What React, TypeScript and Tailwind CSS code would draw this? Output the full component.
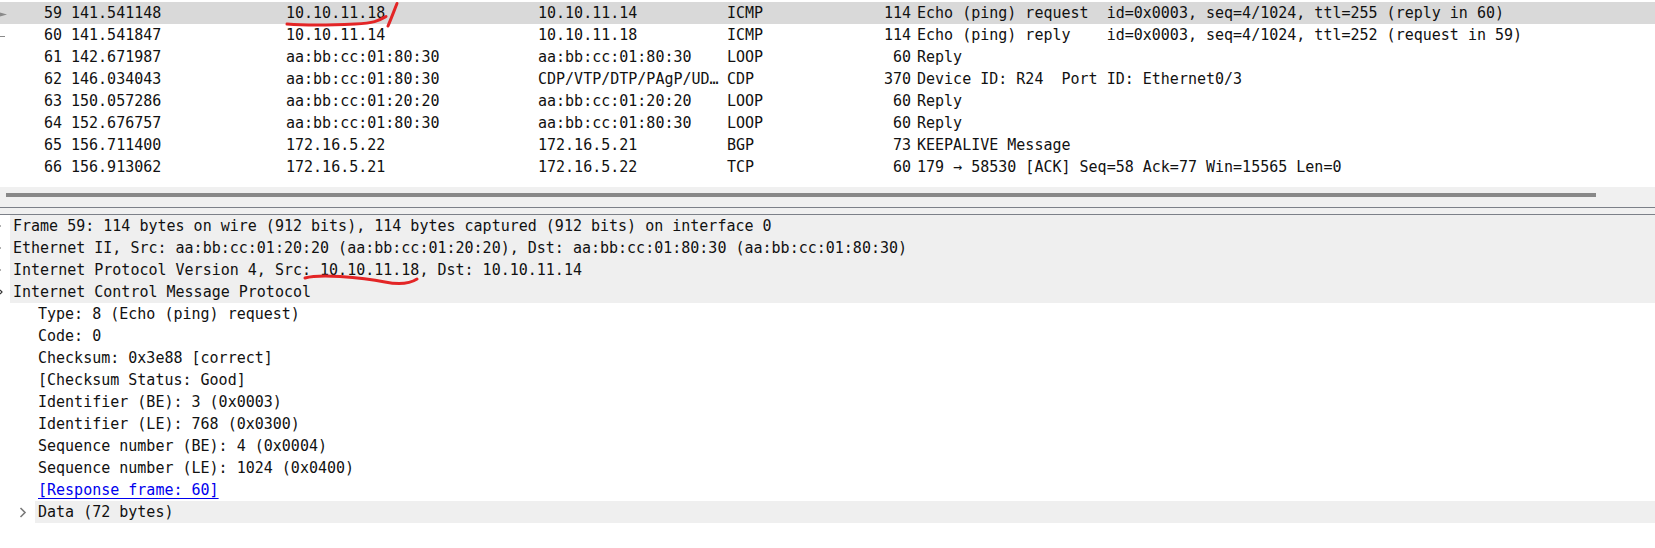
import React from "react";

type Packet = {
  no: number;
  time: string;
  src: string;
  dst: string;
  proto: string;
  len: number;
  info: string;
  mark?: "request" | "reply";
  selected?: boolean;
};

const packets: Packet[] = [
  { no: 59, time: "141.541148", src: "10.10.11.18", dst: "10.10.11.14", proto: "ICMP", len: 114, info: "Echo (ping) request  id=0x0003, seq=4/1024, ttl=255 (reply in 60)", mark: "request", selected: true },
  { no: 60, time: "141.541847", src: "10.10.11.14", dst: "10.10.11.18", proto: "ICMP", len: 114, info: "Echo (ping) reply    id=0x0003, seq=4/1024, ttl=252 (request in 59)", mark: "reply" },
  { no: 61, time: "142.671987", src: "aa:bb:cc:01:80:30", dst: "aa:bb:cc:01:80:30", proto: "LOOP", len: 60, info: "Reply" },
  { no: 62, time: "146.034043", src: "aa:bb:cc:01:80:30", dst: "CDP/VTP/DTP/PAgP/UD…", proto: "CDP", len: 370, info: "Device ID: R24  Port ID: Ethernet0/3" },
  { no: 63, time: "150.057286", src: "aa:bb:cc:01:20:20", dst: "aa:bb:cc:01:20:20", proto: "LOOP", len: 60, info: "Reply" },
  { no: 64, time: "152.676757", src: "aa:bb:cc:01:80:30", dst: "aa:bb:cc:01:80:30", proto: "LOOP", len: 60, info: "Reply" },
  { no: 65, time: "156.711400", src: "172.16.5.22", dst: "172.16.5.21", proto: "BGP", len: 73, info: "KEEPALIVE Message" },
  { no: 66, time: "156.913062", src: "172.16.5.21", dst: "172.16.5.22", proto: "TCP", len: 60, info: "179 → 58530 [ACK] Seq=58 Ack=77 Win=15565 Len=0" },
];

const topLevel = [
  "Frame 59: 114 bytes on wire (912 bits), 114 bytes captured (912 bits) on interface 0",
  "Ethernet II, Src: aa:bb:cc:01:20:20 (aa:bb:cc:01:20:20), Dst: aa:bb:cc:01:80:30 (aa:bb:cc:01:80:30)",
  "Internet Protocol Version 4, Src: 10.10.11.18, Dst: 10.10.11.14",
  "Internet Control Message Protocol",
];

const icmpFields = [
  "Type: 8 (Echo (ping) request)",
  "Code: 0",
  "Checksum: 0x3e88 [correct]",
  "[Checksum Status: Good]",
  "Identifier (BE): 3 (0x0003)",
  "Identifier (LE): 768 (0x0300)",
  "Sequence number (BE): 4 (0x0004)",
  "Sequence number (LE): 1024 (0x0400)",
];

function RelatedMark({ mark }: { mark?: Packet["mark"] }) {
  if (mark === "request")
    return (
      <svg width="8" height="22" viewBox="0 0 8 22">
        <path d="M0 10.5 L7 12.5 L0 14.5 Z" fill="#8a8a8a" />
      </svg>
    );
  if (mark === "reply")
    return (
      <svg width="8" height="22" viewBox="0 0 8 22">
        <path d="M0 12.5 H5" stroke="#8a8a8a" strokeWidth="1" />
      </svg>
    );
  return null;
}

function PacketRow({ p }: { p: Packet }) {
  return (
    <div className={`flex h-[22px] items-center whitespace-pre leading-[22px] ${p.selected ? "bg-[#d9d9d9]" : ""}`}>
      <div className="w-[10px] shrink-0">
        <RelatedMark mark={p.mark} />
      </div>
      <div className="w-[52px] shrink-0 text-right">{p.no}</div>
      <div className="w-[218px] shrink-0 pl-[9px]">{p.time}</div>
      <div className="w-[252px] shrink-0 pl-[6px]">{p.src}</div>
      <div className="w-[189px] shrink-0 overflow-hidden pl-[6px]">{p.dst}</div>
      <div className="w-[124px] shrink-0 pl-[6px]">{p.proto}</div>
      <div className="w-[66px] shrink-0 text-right">{p.len}</div>
      <div className="pl-[6px]">{p.info}</div>
    </div>
  );
}

export default function App() {
  return (
    <div
      className="relative h-[548px] w-[1655px] overflow-hidden bg-white text-[15px] text-[#111]"
      style={{ fontFamily: '"DejaVu Sans Mono", "Liberation Mono", monospace' }}
    >
      {/* packet list */}
      <div className="h-[187px] pt-[2px]">
        {packets.map((p) => (
          <PacketRow key={p.no} p={p} />
        ))}
      </div>

      {/* horizontal scrollbar */}
      <div className="h-[20px] bg-[#f0f0f0] pl-[6px] pt-[6px]">
        <div className="h-[4px] w-[1590px] bg-[#888888]" />
      </div>

      {/* splitter */}
      <div className="h-[8px] border-y border-[#7c8088] bg-[#f0f0f0]" />

      {/* packet details */}
      <div className="whitespace-pre leading-[22px]">
        {topLevel.map((t, i) => (
          <div key={t} className="flex h-[22px]">
            <div className="relative w-[10px] shrink-0">
              {i < 3 ? (
                <div className="absolute left-0 top-[10px] h-[2px] w-[1px] bg-[#b0b0b0]" />
              ) : (
                <svg className="absolute left-0 top-[8px]" width="4" height="6" viewBox="0 0 4 6">
                  <path d="M0 1 L2 3 L0 5" stroke="#333" strokeWidth="1.2" fill="none" />
                </svg>
              )}
            </div>
            <div className="flex-1 bg-[#efefef] pl-[3px]">{t}</div>
          </div>
        ))}
        {icmpFields.map((t) => (
          <div key={t} className="h-[22px] pl-[38px]">
            {t}
          </div>
        ))}
        <div className="h-[22px] pl-[38px]">
          <span className="text-[#0000ee] underline underline-offset-[3px]">[Response frame: 60]</span>
        </div>
        <div className="flex h-[22px]">
          <div className="flex w-[35px] shrink-0 items-center pl-[19px]">
            <svg width="8" height="11" viewBox="0 0 8 11">
              <path d="M1.5 1 L6 5.5 L1.5 10" stroke="#7a7a7a" strokeWidth="1.6" fill="none" />
            </svg>
          </div>
          <div className="flex-1 bg-[#efefef] pl-[3px]">Data (72 bytes)</div>
        </div>
      </div>

      {/* red hand-drawn annotations */}
      <svg className="pointer-events-none absolute left-0 top-0" width="1655" height="548" viewBox="0 0 1655 548">
        <g stroke="#e32526" strokeWidth="3" strokeLinecap="round" fill="none">
          <path d="M287 24 C 305 25.5, 335 25, 355 24 S 378 21, 386 16.5" />
          <path d="M388 26 C 391 19, 394 11, 397 3.5" />
          <path d="M305 278 C 312 276, 325 275.5, 340 276.5 S 370 279, 385 282 S 410 283.5, 417 279" />
        </g>
      </svg>
    </div>
  );
}
